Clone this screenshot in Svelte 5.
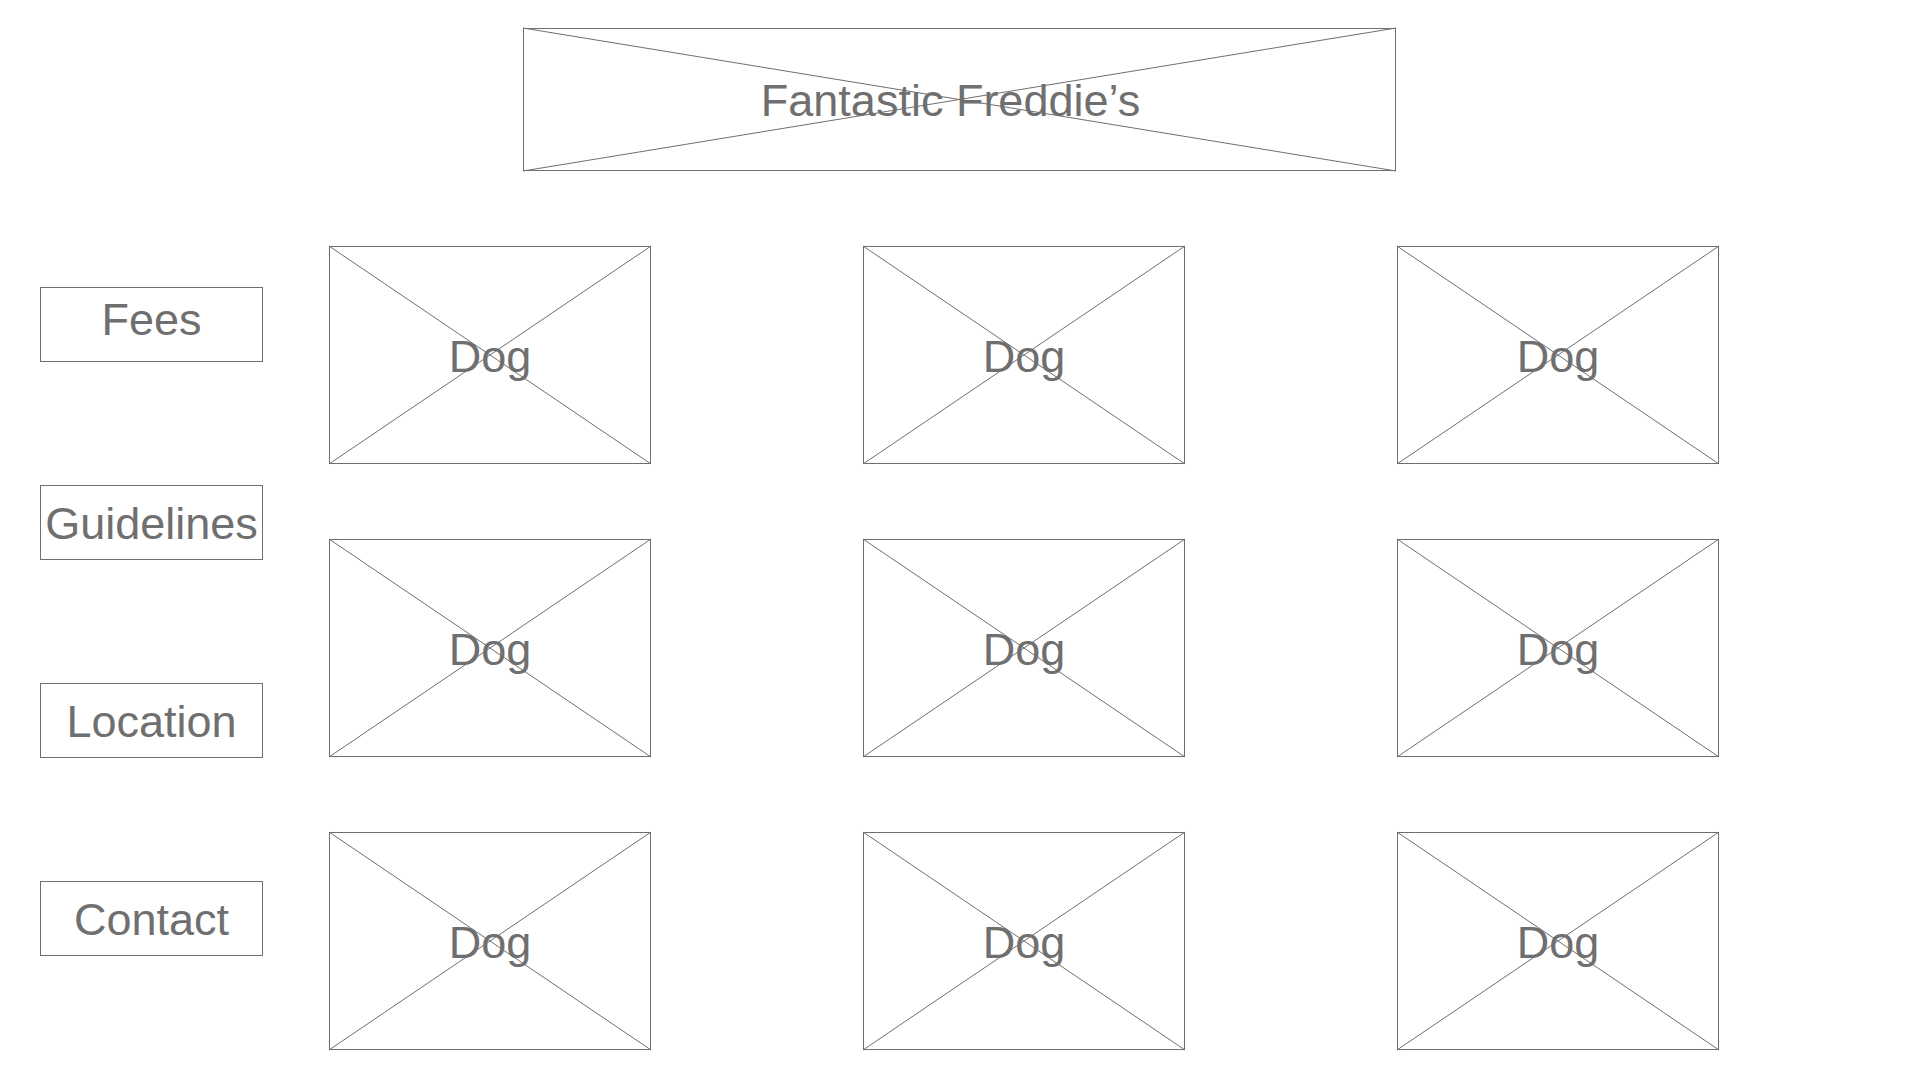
<script>
  const links = [
    { label: 'Fees', href: '#fees', raised: true },
    { label: 'Guidelines', href: '#guidelines' },
    { label: 'Location', href: '#location' },
    { label: 'Contact', href: '#contact' },
  ];
  const dogs = Array.from({ length: 9 }, (_, id) => ({ id, name: 'Dog' }));
</script>

{#snippet cross()}
  <svg class="cross" aria-hidden="true">
    <line x1="0" y1="0" x2="100%" y2="100%" />
    <line x1="0" y1="100%" x2="100%" y2="0" />
  </svg>
{/snippet}

<div class="page">
  <header class="frame banner">
    {@render cross()}
    <h1>Fantastic Freddie’s</h1>
  </header>

  <div class="content">
    <nav aria-label="Main">
      {#each links as link (link.href)}
        <a class="frame" class:raised={link.raised} href={link.href}>{link.label}</a>
      {/each}
    </nav>

    <main>
      {#each dogs as dog (dog.id)}
        <figure class="frame card">
          {@render cross()}
          <figcaption>{dog.name}</figcaption>
        </figure>
      {/each}
    </main>
  </div>
</div>

<style>
  :global(body) {
    margin: 0;
    background: #fff;
  }

  .page {
    display: flex;
    flex-direction: column;
    align-items: center;
    gap: 75px;
    padding: 28px 0 30px;
    color: #6f6f6f;
    font: 45px/52px 'Liberation Sans', Arial, sans-serif;
  }

  .frame {
    position: relative;
    box-sizing: border-box;
    display: flex;
    align-items: center;
    justify-content: center;
    margin: 0;
    padding-top: 2px;
    border: 1px solid #6f6f6f;
  }

  .cross {
    position: absolute;
    top: -1px;
    left: -1px;
    width: calc(100% + 2px);
    height: calc(100% + 2px);
    overflow: visible;
    pointer-events: none;
  }

  .cross line {
    stroke: #6f6f6f;
    stroke-width: 1px;
  }

  .banner {
    width: 100%;
    max-width: 873px;
    min-height: 143px;
    margin-right: 1px;
    padding-right: 18px;
  }

  h1 {
    margin: 0;
    font: inherit;
  }

  .content {
    box-sizing: border-box;
    display: grid;
    grid-template-columns: 223px 1fr;
    align-items: start;
    gap: 66px;
    width: 100%;
    padding: 0 201px 0 40px;
  }

  nav {
    display: grid;
    gap: 123px;
    padding-top: 41px;
  }

  nav a {
    min-height: 75px;
    color: inherit;
    text-decoration: none;
  }

  nav a.raised {
    padding-bottom: 12px;
  }

  main {
    display: grid;
    grid-template-columns: repeat(3, minmax(0, 322px));
    justify-content: space-between;
    row-gap: 75px;
  }

  .card {
    min-height: 218px;
    padding-top: 4px;
  }
</style>
